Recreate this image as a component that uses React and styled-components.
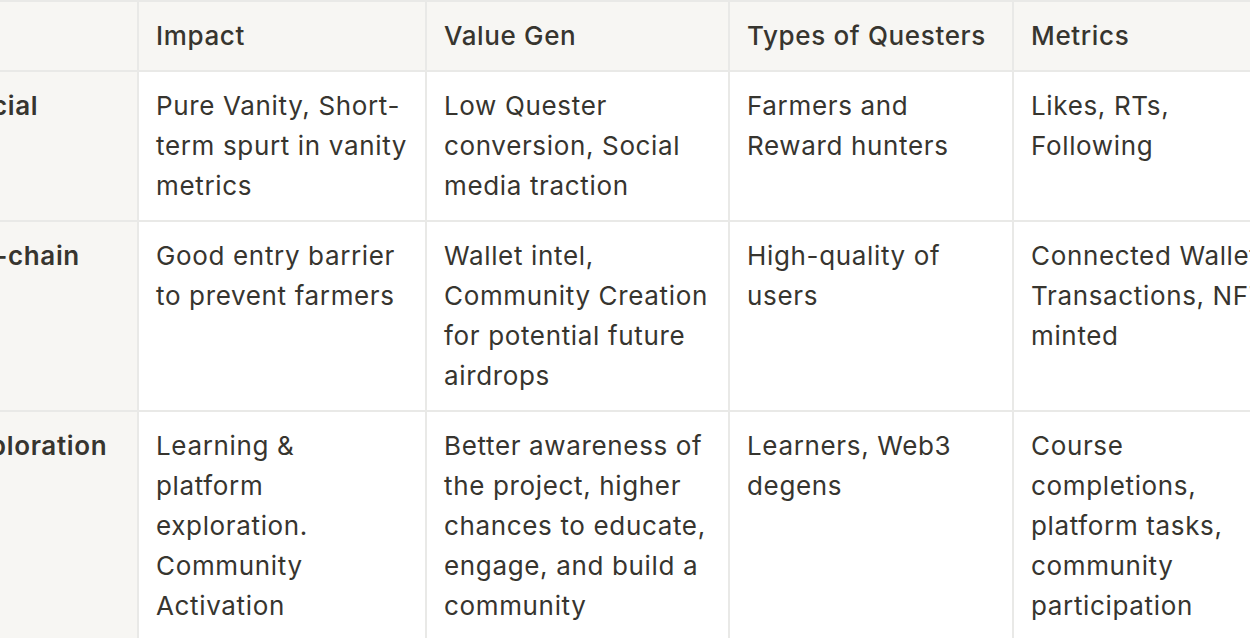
import React from "react";
import styled, { createGlobalStyle } from "styled-components";

const Global = createGlobalStyle`
  html, body { margin: 0; padding: 0; background: #ffffff; overflow: hidden; }
  body { font-family: Inter, "Noto Sans", "Liberation Sans", sans-serif; }
`;

const Viewport = styled.div`
  width: 1250px;
  height: 638px;
  overflow: hidden;
  background: #ffffff;
`;

const Grid = styled.div`
  display: grid;
  grid-template-columns: 196px 286px 301px 282px 340px;
  gap: 2px;
  padding: 2px 0 0 2px;
  margin-left: -61px;
  width: max-content;
  background: #e9e9e7;
`;

const Cell = styled.div`
  box-sizing: border-box;
  padding: 14px 17px;
  background: ${(p) => (p.$head ? "#f7f6f3" : "#ffffff")};
  color: #37352f;
  font-size: 26px;
  letter-spacing: 0.65px;
  line-height: 40px;
  font-weight: ${(p) => (p.$rowHead ? 600 : p.$head ? 500 : 400)};
  white-space: pre;
  overflow: hidden;
`;

const headers = ["", "Impact", "Value Gen", "Types of Questers", "Metrics"];

const rows = [
  [
    "Social",
    "Pure Vanity, Short-\nterm spurt in vanity\nmetrics",
    "Low Quester\nconversion, Social\nmedia traction",
    "Farmers and\nReward hunters",
    "Likes, RTs,\nFollowing",
  ],
  [
    "On-chain",
    "Good entry barrier\nto prevent farmers",
    "Wallet intel,\nCommunity Creation\nfor potential future\nairdrops",
    "High-quality of\nusers",
    "Connected Wallets,\nTransactions, NFTs\nminted",
  ],
  [
    "Exploration",
    "Learning &\nplatform\nexploration.\nCommunity\nActivation",
    "Better awareness of\nthe project, higher\nchances to educate,\nengage, and build a\ncommunity",
    "Learners, Web3\ndegens",
    "Course\ncompletions,\nplatform tasks,\ncommunity\nparticipation",
  ],
];

export default function App() {
  return (
    <>
      <Global />
      <Viewport>
        <Grid>
          {headers.map((h, i) => (
            <Cell key={"h" + i} $head>
              {h}
            </Cell>
          ))}
          {rows.map((r, ri) =>
            r.map((c, ci) => (
              <Cell key={ri + "-" + ci} $head={ci === 0} $rowHead={ci === 0}>
                {c}
              </Cell>
            ))
          )}
        </Grid>
      </Viewport>
    </>
  );
}
